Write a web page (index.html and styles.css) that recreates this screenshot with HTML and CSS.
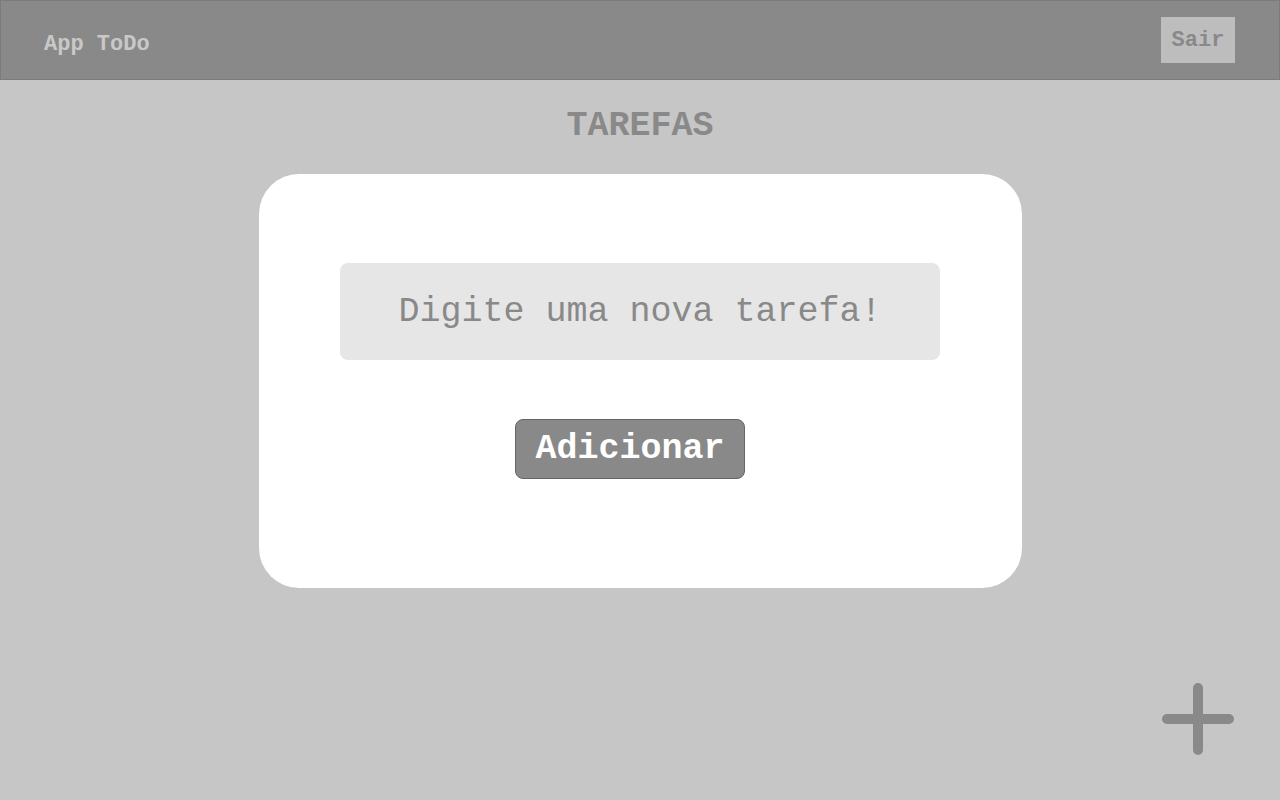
FILE: index.html
```html
<!DOCTYPE html>
<html lang="pt">
<head>
<meta charset="utf-8">
<title>App ToDo</title>
<link rel="stylesheet" href="styles.css">
</head>
<body>
<header class="topbar">
  <span class="brand">App ToDo</span>
  <button class="logout" type="button">Sair</button>
</header>
<main class="content">
  <h1 class="title">TAREFAS</h1>
  <section class="card">
    <input class="task-input" type="text" placeholder="Digite uma nova tarefa!">
    <button class="add-btn" type="button">Adicionar</button>
  </section>
</main>
<button class="fab" type="button" aria-label="Adicionar">
  <svg width="72" height="72" viewBox="0 0 72 72" aria-hidden="true">
    <path d="M36 5 V67 M5 36 H67" stroke="#898989" stroke-width="10" stroke-linecap="round" fill="none"/>
  </svg>
</button>
</body>
</html>
```
FILE: styles.css
```css
* { box-sizing: border-box; }
html, body { margin: 0; padding: 0; }
body {
  background: #c6c6c6;
  font-family: "Courier New", "Liberation Mono", monospace;
  height: 800px;
  overflow: hidden;
}
.topbar {
  height: 80px;
  background: #898989;
  border: 1px solid #7b7b7b;
  display: flex;
  align-items: center;
  justify-content: space-between;
  padding: 0 44px 0 43px;
}
.brand {
  color: #c8c8c8;
  font-weight: bold;
  font-size: 22px;
  margin-top: 8px;
}
.logout {
  background: #bdbdbd;
  color: #898989;
  border: none;
  font-family: inherit;
  font-weight: bold;
  font-size: 22px;
  width: 74px;
  height: 46px;
  padding: 0;
  margin-top: 0;
}
.content {
  display: flex;
  flex-direction: column;
  align-items: center;
}
.title {
  margin: 26px 0 28px;
  font-size: 35px;
  line-height: 40px;
  color: #898989;
  font-weight: bold;
}
.card {
  width: 763px;
  height: 414px;
  background: #ffffff;
  border-radius: 40px;
  display: flex;
  flex-direction: column;
  align-items: center;
  padding-top: 89px;
}
.task-input {
  width: 600px;
  height: 97px;
  background: #e6e6e6;
  border: none;
  border-radius: 8px;
  text-align: center;
  font-family: inherit;
  font-weight: normal;
  font-size: 35px;
  color: #555;
  outline: none;
}
.task-input::placeholder { color: #898989; }
.add-btn {
  margin-top: 59px;
  margin-right: 20px;
  width: 230px;
  height: 60px;
  background: #898989;
  border: 1px solid #666666;
  border-radius: 8px;
  color: #ffffff;
  font-family: inherit;
  font-weight: bold;
  font-size: 35px;
  padding: 0;
}
.fab {
  position: fixed;
  right: 41px;
  bottom: 40px;
  width: 82px;
  height: 82px;
  padding: 5px;
  background: none;
  border: none;
}
.fab svg { display: block; }
```
